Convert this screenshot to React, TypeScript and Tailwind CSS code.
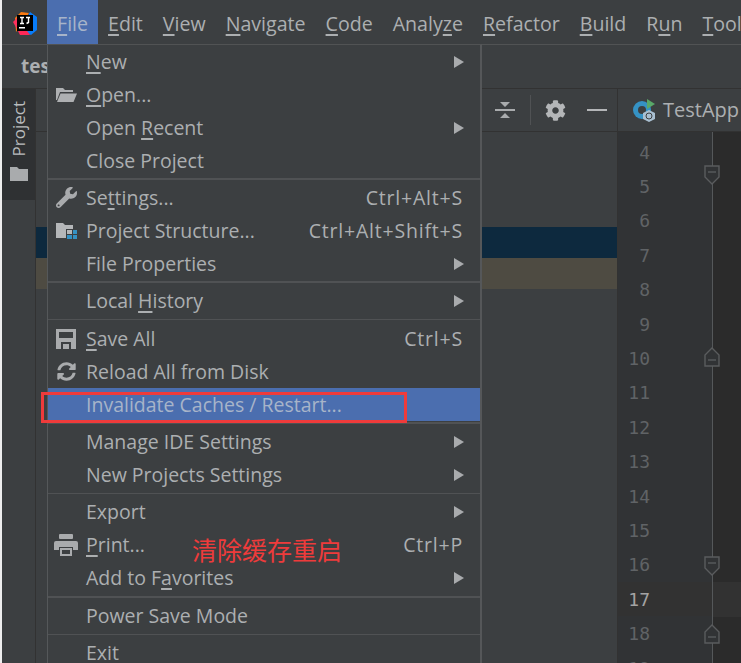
import { FaCog, FaSyncAlt, FaWrench } from "react-icons/fa"

type MenuEntry =
  | { sep: true; thin?: boolean; tall?: boolean }
  | {
      sep?: false
      label: string
      key?: number
      shortcut?: string
      arrow?: boolean
      icon?: React.ReactNode
      active?: boolean
    }

const menuBar = [
  { label: "File", key: 0 },
  { label: "Edit", key: 0 },
  { label: "View", key: 0 },
  { label: "Navigate", key: 0 },
  { label: "Code", key: 0 },
  { label: "Analyze", key: 5 },
  { label: "Refactor", key: 0 },
  { label: "Build", key: 0 },
  { label: "Run", key: 1 },
  { label: "Tools", key: 0 },
]

const FolderOpen = () => (
  <svg width="23" height="16" viewBox="0 0 23 16" fill="#aeb0b2">
    <path d="M1 1h7l2 2h8v2H5L2 13H1z" />
    <path d="M5.5 6.5H22l-3.5 8.5H2z" />
  </svg>
)

const ProjectIcon = () => (
  <svg width="23" height="18" viewBox="0 0 23 18">
    <path d="M1 1h7l2 2h8v4h-7v9H1z" fill="#b5b7b9" />
    <rect x="12" y="8" width="5" height="4" fill="#b5b7b9" />
    <rect x="18" y="8" width="4" height="4" fill="#3592c4" />
    <rect x="12" y="13" width="5" height="4" fill="#3592c4" />
    <rect x="18" y="13" width="4" height="4" fill="#3592c4" />
  </svg>
)

const SaveIcon = () => (
  <svg width="20" height="20" viewBox="0 0 20 20">
    <path d="M0 0h20v20H0z" fill="#a9abad" />
    <rect x="3" y="3" width="14" height="6" fill="#3c3f41" />
    <rect x="5" y="13" width="10" height="7" fill="#3c3f41" />
    <rect x="7" y="15" width="6" height="5" fill="#a9abad" />
  </svg>
)

const PrintIcon = () => (
  <svg width="24" height="22" viewBox="0 0 24 22" fill="#a9abad">
    <rect x="5" y="0" width="14" height="5" rx="1" />
    <path d="M2 7h20a2 2 0 0 1 2 2v7h-5v-3H5v3H0V9a2 2 0 0 1 2-2z" />
    <path d="M6 14h12v8H6zM8 16v4h8v-4z" fillRule="evenodd" />
  </svg>
)

const FoldDown = () => (
  <svg width="16" height="20" viewBox="0 0 16 20" fill="#313335" stroke="#5a5c5e" strokeWidth="1.4">
    <path d="M1 1h14v11l-7 7-7-7z" />
    <path d="M4 7h8" />
  </svg>
)

const FoldUp = () => (
  <svg width="16" height="20" viewBox="0 0 16 20" fill="#313335" stroke="#5a5c5e" strokeWidth="1.4">
    <path d="M1 19h14V8L8 1 1 8z" />
    <path d="M4 13h8" />
  </svg>
)

const menuItems: MenuEntry[] = [
  { label: "New", key: 0, arrow: true },
  { label: "Open...", key: 0, icon: <FolderOpen /> },
  { label: "Open Recent", key: 5, arrow: true },
  { label: "Close Project" },
  { sep: true },
  { label: "Settings...", key: 2, shortcut: "Ctrl+Alt+S", icon: <FaWrench size={21} color="#a9abad" /> },
  { label: "Project Structure...", shortcut: "Ctrl+Alt+Shift+S", icon: <ProjectIcon /> },
  { label: "File Properties", arrow: true },
  { sep: true },
  { label: "Local History", key: 6, arrow: true },
  { sep: true, thin: true, tall: true },
  { label: "Save All", key: 0, shortcut: "Ctrl+S", icon: <SaveIcon /> },
  { label: "Reload All from Disk", icon: <FaSyncAlt size={19} color="#a9abad" /> },
  { label: "Invalidate Caches / Restart...", active: true },
  { sep: true },
  { label: "Manage IDE Settings", arrow: true },
  { label: "New Projects Settings", arrow: true },
  { sep: true, thin: true },
  { label: "Export", arrow: true },
  { label: "Print...", key: 0, shortcut: "Ctrl+P", icon: <PrintIcon /> },
  { label: "Add to Favorites", key: 8, arrow: true },
  { sep: true, tall: true },
  { label: "Power Save Mode" },
  { sep: true, thin: true },
  { label: "Exit", key: 1 },
]

const lineNumbers = [4, 5, 6, 7, 8, 9, 10, 11, 12, 13, 14, 15, 16, 17, 18, 19]

function Mnemonic({ label, index }: { label: string; index?: number }) {
  if (index === undefined) return <span>{label}</span>
  return (
    <span>
      {label.slice(0, index)}
      <span className="underline decoration-[1.5px] underline-offset-[3px]">{label[index]}</span>
      {label.slice(index + 1)}
    </span>
  )
}

function FileMenu() {
  return (
    <div className="absolute left-[45px] top-[44px] w-[435px] h-[640px] bg-[#3c3f41] border-l border-l-[#55585a] border-r-2 border-r-[#555759] border-t border-t-[#515354] text-[19.5px] text-[#acafb1]">
      {menuItems.map((item, i) =>
        item.sep ? (
          <div key={i} className={`flex items-center ${item.tall ? "h-[5px]" : "h-1"}`}>
            <div className={`w-full bg-[#505254] ${item.thin ? "h-px" : "h-0.5"}`} />
          </div>
        ) : (
          <div
            key={i}
            className={`relative h-[33px] flex items-center justify-between pl-[38px] pr-[17px] ${
              item.active ? "bg-[#4b6eaf] text-[#a7b4c9]" : ""
            }`}
          >
            {item.icon && <div className="absolute left-[6px] top-0 h-full w-6 flex items-center justify-center">{item.icon}</div>}
            <Mnemonic label={item.label} index={item.key} />
            {item.shortcut && <span className="tracking-[0.8px]">{item.shortcut}</span>}
            {item.arrow && (
              <div className="border-y-[6px] border-y-transparent border-l-[10px] border-l-[#a9abad] mr-[-1px]" />
            )}
          </div>
        ),
      )}
      <div className="absolute left-[144px] top-[492px] text-[#ee3b3b] text-[25px] leading-[24px] font-['Noto_Sans_CJK_SC',sans-serif]">
        清除缓存重启
      </div>
    </div>
  )
}

export default function App() {
  return (
    <div className="relative w-[741px] h-[663px] overflow-hidden bg-[#3c3f41] border-l-2 border-l-[#eeeeee] font-['Open_Sans','Noto_Sans',sans-serif] text-[#acafb1]">
      {/* Menu bar */}
      <div className="h-[45px] flex items-center border-b border-b-[#515354] text-[19.6px]">
        <div className="w-[45px] h-full flex items-center justify-center shrink-0 pt-[1px]">
          <svg width="26" height="26" viewBox="0 0 26 26">
            <path d="M3 8 9 2l8 1-6 10-7 9z" fill="#f97a12" />
            <path d="M1 12 6 7l5 5-6 7z" fill="#fe315d" />
            <path d="M8 20l10-18 7 5v13l-6 5z" fill="#087cfa" />
            <path d="M5 19l6-4 7 10H8z" fill="#fe2857" />
            <rect x="5" y="5" width="16" height="16" fill="#000" />
            <rect x="7" y="17" width="6" height="1.5" fill="#fff" />
            <path d="M8 7.5h4M10 7.5v6M8 13.5h4M14 7.5h4M16.5 7.5v5l-2 1" stroke="#fff" strokeWidth="1.4" fill="none" />
          </svg>
        </div>
        {menuBar.map((m, i) => (
          <div
            key={m.label}
            className={`h-full flex items-center pt-[3px] px-[10px] shrink-0 ${i === 0 ? "bg-[#4b6eaf] text-[#a7b4c9]" : ""}`}
          >
            <Mnemonic label={m.label} index={m.key} />
          </div>
        ))}
      </div>

      {/* Navigation bar */}
      <div className="h-[44px] flex items-center pl-[19px] border-b border-b-[#323232] text-[19px] font-bold">tes</div>

      {/* Body */}
      <div className="flex h-[574px]">
        <div className="w-[34px] shrink-0 border-r border-r-[#323232]">
          <div className="h-[111px] bg-[#2f3133] flex flex-col items-center justify-end pb-[19px] gap-[11px]">
            <div className="[writing-mode:vertical-rl] rotate-180 text-[17px] leading-none text-[#b9bbbd]">Project</div>
            <svg width="18" height="14" viewBox="0 0 18 14" fill="#a9abad">
              <path d="M0 0h7l2 2h9v12H0z" />
            </svg>
          </div>
        </div>

        {/* Project panel */}
        <div className="w-[581px] shrink-0">
          <div className="h-[43px] flex items-center justify-end border-b border-b-[#323232]">
            <svg width="20" height="24" viewBox="0 0 20 24" fill="#a9abad" className="mr-[15px]">
              <path d="M0 11h20v2H0zM5 4h10l-5 5zM5 20h10l-5-5z" />
            </svg>
            <div className="w-px h-[30px] bg-[#505254] mr-[14px]" />
            <FaCog size={21} color="#b4b6b8" className="mr-[21px]" />
            <div className="w-[20px] h-[2px] bg-[#b4b6b8] mr-[10px]" />
          </div>
          <div className="h-[95px]" />
          <div className="h-[31px] bg-[#0d293e]" />
          <div className="h-[31px] bg-[#4e4b42]" />
        </div>

        {/* Editor */}
        <div className="flex-1 min-w-0 border-l border-l-[#323232]">
          <div className="h-[43px] flex items-center gap-[6px] pl-[13px] border-b border-b-[#323232] text-[20px] whitespace-nowrap">
            <svg width="26" height="26" viewBox="0 0 26 26" className="shrink-0">
              <circle cx="11" cy="13" r="9" fill="#3592c4" />
              <circle cx="11" cy="13" r="4" fill="#3c3f41" />
              <path d="M16 2l8 5-8 5z" fill="#59a869" />
              <path d="M18 13l6 3v6l-6 3-6-3v-6z" fill="#a9bfd1" />
              <circle cx="18" cy="19" r="3" fill="none" stroke="#3c3f41" strokeWidth="1" />
            </svg>
            TestApp
          </div>
          <div className="flex h-[531px]">
            <div className="w-[94px] bg-[#313335] relative font-['DejaVu_Sans_Mono',monospace] text-[18px] text-[#606366] pt-[3px]">
              {lineNumbers.map((n) => (
                <div
                  key={n}
                  className={`h-[34.4px] flex items-center justify-end relative ${n === 17 ? "bg-[#323232] text-[#a4a3a3]" : ""}`}
                >
                  <span className="mr-[62px]">{n}</span>
                </div>
              ))}
              <div className="absolute left-[86px] top-[33px]"><FoldDown /></div>
              <div className="absolute left-[86px] top-[215px]"><FoldUp /></div>
              <div className="absolute left-[86px] top-[424px]"><FoldDown /></div>
              <div className="absolute left-[86px] top-[492px]"><FoldUp /></div>
            </div>
            <div className="flex-1 bg-[#2b2b2b] border-l border-l-[#55585a] pt-[450px]">
              <div className="h-[35px] bg-[#323232]" />
            </div>
          </div>
        </div>
      </div>

      <FileMenu />

      {/* Red annotation around Invalidate Caches */}
      <div className="absolute left-[39px] top-[392px] w-[366px] h-[31px] border-[3px] border-[#ef3b3b]" />
    </div>
  )
}
